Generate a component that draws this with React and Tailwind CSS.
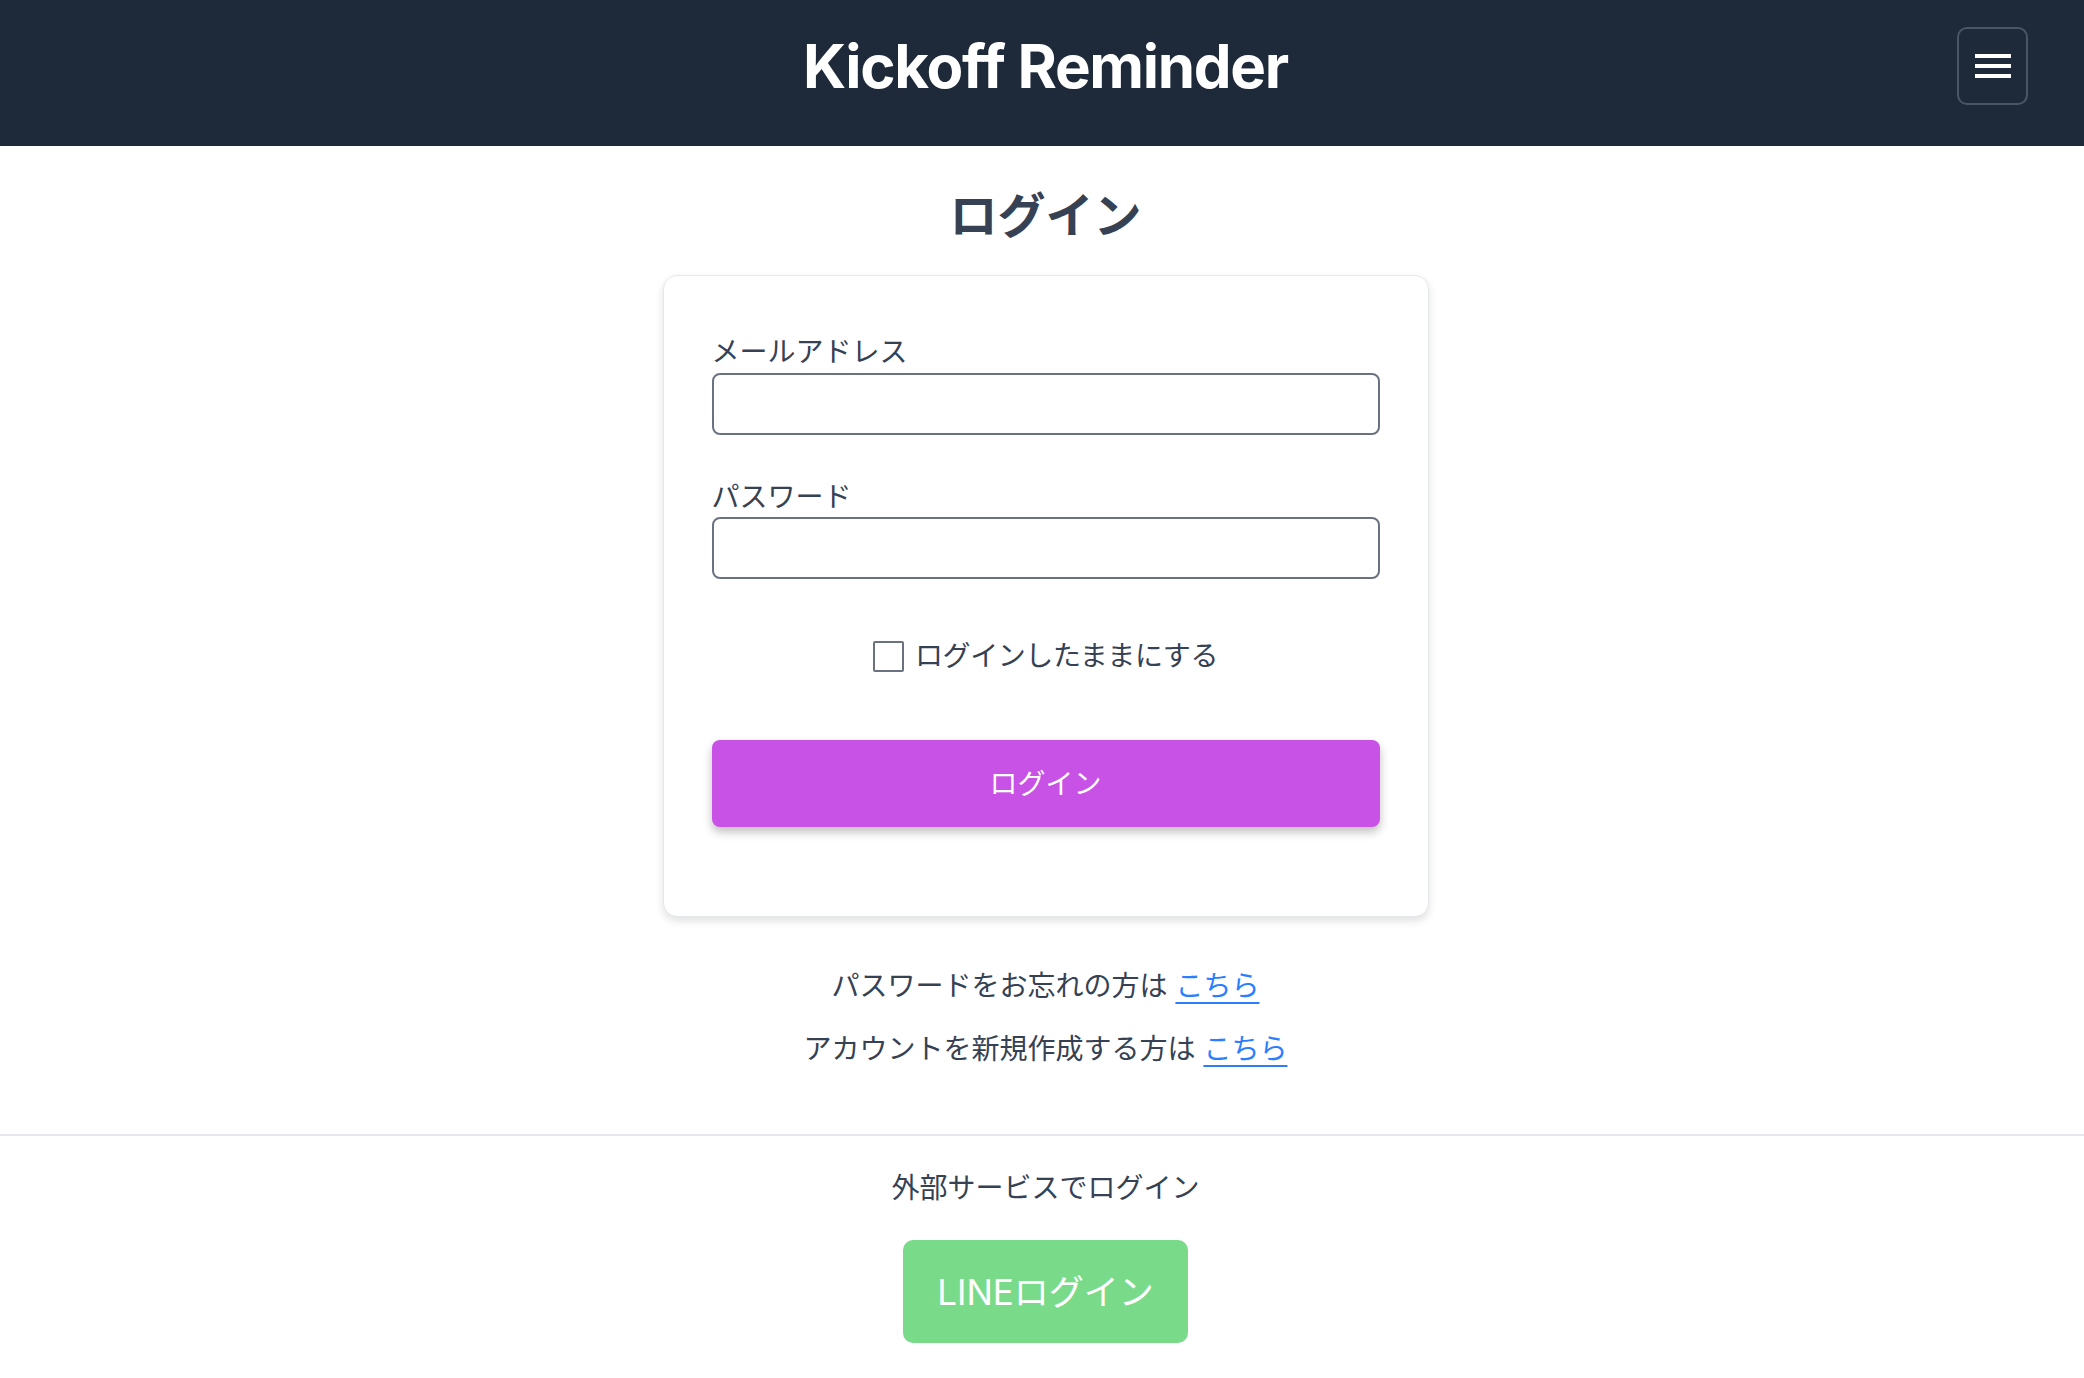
import React, { useState } from 'react';

const jp = 'font-["Inter","Noto_Sans_CJK_JP",sans-serif]';

export default function App() {
    const [email, setEmail] = useState('');
    const [password, setPassword] = useState('');
    const [remember, setRemember] = useState(false);

    return (
        <div className={`min-h-screen bg-white text-gray-700 ${jp}`}>
            {/* ヘッダー */}
            <header className="bg-gray-800 pt-[27px] pb-[41px] pl-[63px] pr-[56px]">
                <div className="relative flex items-center justify-center h-[78px]">
                    <h1 className="text-[60px] leading-[60px] font-bold text-white tracking-[-1.3px] font-['Inter',sans-serif]">
                        Kickoff Reminder
                    </h1>
                    <button className="absolute right-0 top-0 w-[71px] h-[78px] rounded-[10px] border-2 border-gray-600 flex flex-col items-center justify-center gap-[6px]">
                        <span className="block w-[36px] h-[4px] bg-white"></span>
                        <span className="block w-[36px] h-[4px] bg-white"></span>
                        <span className="block w-[36px] h-[4px] bg-white"></span>
                    </button>
                </div>
            </header>

            <main className="flex flex-col items-center pl-[7px]">
                <h2 className="mt-[38px] text-[48px] leading-[64px] font-bold text-gray-700">ログイン</h2>

                <div className="mt-[27px] w-[766px] bg-white border border-gray-200 rounded-[14px] shadow-[0_4px_8px_rgba(0,0,0,0.12)] px-[48px] pt-[56px] pb-[89px]">
                    <label className="block text-[28px] leading-[40px]">メールアドレス</label>
                    <input
                        type="email"
                        value={email}
                        onChange={(e) => setEmail(e.target.value)}
                        className="mt-[1px] block w-full h-[62px] border-2 border-gray-500 rounded-[8px] px-4 text-[28px] outline-none"
                    />

                    <label className="mt-[42px] block text-[28px] leading-[40px]">パスワード</label>
                    <input
                        type="password"
                        value={password}
                        onChange={(e) => setPassword(e.target.value)}
                        className="block w-full h-[62px] border-2 border-gray-500 rounded-[8px] px-4 text-[28px] outline-none"
                    />

                    <div className="mt-[57px] h-[40px] flex items-center justify-center gap-[11px] tracking-[-0.4px]">
                        <input
                            type="checkbox"
                            checked={remember}
                            onChange={() => setRemember(!remember)}
                            className="appearance-none w-[31px] h-[31px] border-2 border-gray-500 rounded-[2px] checked:bg-gray-500"
                        />
                        <span className="text-[28px] leading-[40px]">ログインしたままにする</span>
                    </div>

                    <button className="mt-[64px] w-full h-[87px] rounded-[8px] bg-[#c851e6] text-white text-[28px] shadow-[0_5px_10px_rgba(0,0,0,0.25)]">
                        ログイン
                    </button>
                </div>

                <p className="mt-[49px] text-[28px] leading-[40px]">
                    パスワードをお忘れの方は <a href="#" className="text-blue-500 underline underline-offset-[6px]">こちら</a>
                </p>
                <p className="mt-[23px] text-[28px] leading-[40px]">
                    アカウントを新規作成する方は <a href="#" className="text-blue-500 underline underline-offset-[6px]">こちら</a>
                </p>
            </main>

            <div className="mt-[65px] border-t-2 border-gray-200"></div>

            <footer className="flex flex-col items-center pb-[35px] pl-[7px]">
                <p className="mt-[32px] text-[28px] leading-[40px]">外部サービスでログイン</p>
                <button className="mt-[32px] h-[103px] px-[34px] rounded-[10px] bg-[#79db8a] text-white text-[35px] leading-[56px]">
                    LINEログイン
                </button>
            </footer>
        </div>
    );
}
